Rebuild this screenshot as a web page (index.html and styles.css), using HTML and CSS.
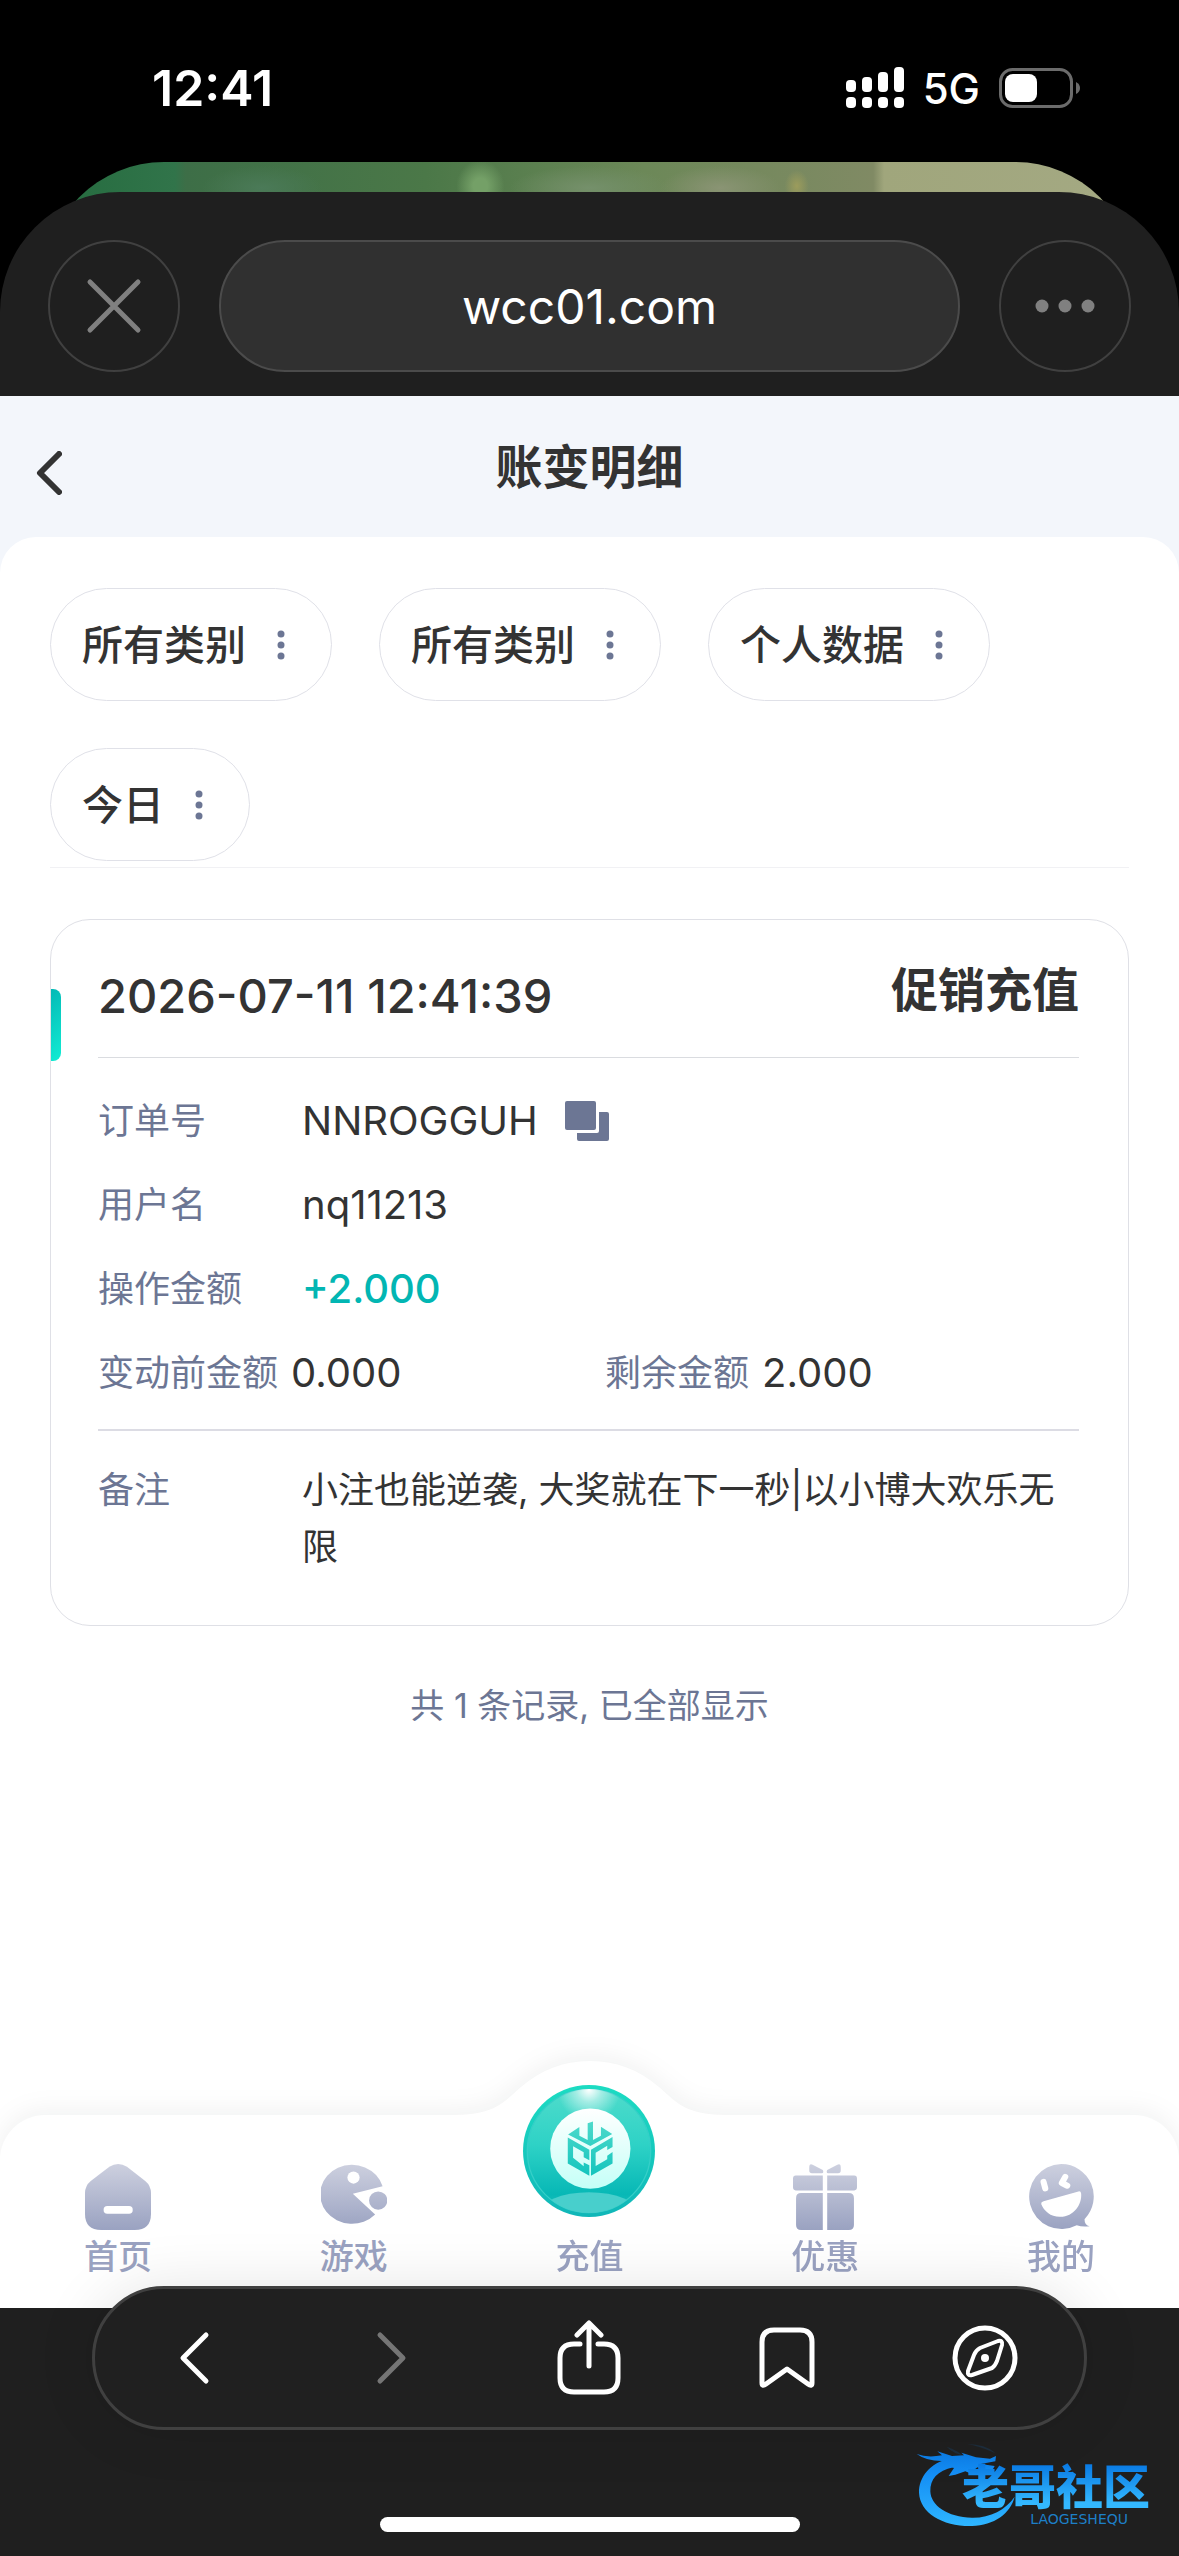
FILE: index.html
```html
<!DOCTYPE html>
<html lang="zh-CN">
<head>
<meta charset="utf-8">
<meta name="viewport" content="width=device-width, initial-scale=1">
<title>账变明细</title>
<link rel="stylesheet" href="styles.css">
</head>
<body>
<header class="status">
  <time class="status-time">12:41</time>
  <div class="status-icons">
    <svg class="signal" viewBox="0 0 58 42" aria-hidden="true">
      <g fill="#fff">
        <rect x="0" y="13" width="10" height="12" rx="4"/><rect x="16" y="10" width="10" height="15" rx="4"/><rect x="32" y="5" width="10" height="20" rx="4"/><rect x="48" y="0" width="10" height="25" rx="4"/>
        <rect x="0" y="30" width="10" height="11" rx="4"/><rect x="16" y="30" width="10" height="11" rx="4"/><rect x="32" y="30" width="10" height="11" rx="4"/><rect x="48" y="30" width="10" height="11" rx="4"/>
      </g>
    </svg>
    <span class="network">5G</span>
    <svg class="battery" viewBox="0 0 82 40" aria-hidden="true">
      <rect x="1.500" y="1.500" width="71" height="37" rx="12" fill="none" stroke="#6b6b6b" stroke-width="3"/>
      <path d="M77 14Q81 16 81 20T77 26Z" fill="#6b6b6b"/>
      <rect x="6" y="6" width="32" height="28" rx="8" fill="#fff"/>
    </svg>
  </div>
</header>

<div class="backdrop"></div>

<div class="sheet">
  <div class="address-bar">
    <button class="round-btn" type="button" aria-label="关闭">
      <svg width="56" height="56" viewBox="0 0 56 56"><path d="M4 4L52 52M52 4L4 52" stroke="#808080" stroke-width="5" stroke-linecap="round"/></svg>
    </button>
    <button class="url" type="button">wcc01.com</button>
    <button class="round-btn" type="button" aria-label="更多">
      <svg width="60" height="14" viewBox="0 0 60 14" fill="#808080"><circle cx="7" cy="7" r="6.500"/><circle cx="30" cy="7" r="6.500"/><circle cx="53" cy="7" r="6.500"/></svg>
    </button>
  </div>

  <div class="app">
    <div class="app-head">
      <button class="back" type="button" aria-label="返回">
        <svg width="26" height="44" viewBox="0 0 26 44"><path d="M23 3L4 22L23 41" fill="none" stroke="#333" stroke-width="6" stroke-linecap="round" stroke-linejoin="round"/></svg>
      </button>
      <h1 class="title">账变明细</h1>
    </div>

    <main class="panel">
      <div class="filters">
        <button class="chip" type="button" aria-haspopup="listbox"><span>所有类别</span><svg class="dots" viewBox="0 0 8 30"><circle cx="4" cy="4" r="3.500"/><circle cx="4" cy="15" r="3.500"/><circle cx="4" cy="26" r="3.500"/></svg></button>
        <button class="chip" type="button" aria-haspopup="listbox"><span>所有类别</span><svg class="dots" viewBox="0 0 8 30"><circle cx="4" cy="4" r="3.500"/><circle cx="4" cy="15" r="3.500"/><circle cx="4" cy="26" r="3.500"/></svg></button>
        <button class="chip" type="button" aria-haspopup="listbox"><span>个人数据</span><svg class="dots" viewBox="0 0 8 30"><circle cx="4" cy="4" r="3.500"/><circle cx="4" cy="15" r="3.500"/><circle cx="4" cy="26" r="3.500"/></svg></button>
        <button class="chip" type="button" aria-haspopup="listbox"><span>今日</span><svg class="dots" viewBox="0 0 8 30"><circle cx="4" cy="4" r="3.500"/><circle cx="4" cy="15" r="3.500"/><circle cx="4" cy="26" r="3.500"/></svg></button>
      </div>

      <article class="card">
        <div class="card-head">
          <time class="card-date">2026-07-11 12:41:39</time>
          <h2 class="card-type">促销充值</h2>
        </div>
        <dl class="details">
          <div class="row">
            <dt>订单号</dt>
            <dd>NNROGGUH
              <button class="copy" type="button" aria-label="复制">
                <svg width="44" height="40" viewBox="0 0 44 40" fill="#6c7694"><rect width="31" height="29" rx="2"/><path d="M34 11H42Q44 11 44 13V38Q44 40 42 40H14Q12 40 12 38V32H32Q34 32 34 30Z"/></svg>
              </button>
            </dd>
          </div>
          <div class="row"><dt>用户名</dt><dd>nq11213</dd></div>
          <div class="row"><dt>操作金额</dt><dd class="gain">+2.000</dd></div>
          <div class="row row-pair">
            <div class="pair"><dt>变动前金额</dt><dd>0.000</dd></div>
            <div class="pair"><dt>剩余金额</dt><dd>2.000</dd></div>
          </div>
        </dl>
        <dl class="remark">
          <dt>备注</dt>
          <dd>小注也能逆袭, 大奖就在下一秒|以小博大欢乐无限</dd>
        </dl>
      </article>

      <p class="summary">共 1 条记录, 已全部显示</p>
    </main>

    <nav class="tabs">
      <svg class="hump" viewBox="0 0 270 56" aria-hidden="true"><path d="M0 54C40 54 50 40 66 26C86 9 108 0 135 0S184 9 204 26C220 40 230 54 270 54V56H0Z" fill="#fff"/></svg>
      <a class="tab" href="#home">
        <svg width="66" height="66" viewBox="0 0 195 195">
          <defs><linearGradient id="soft" x1="0" y1="0" x2="0" y2="195" gradientUnits="userSpaceOnUse"><stop offset="0" stop-color="#cdd0df"/><stop offset="1" stop-color="#9aa2c1"/></linearGradient></defs>
          <path d="M72 8Q98 -8 124 8L178 50Q195 64 195 86V147Q195 195 147 195H48Q0 195 0 147V86Q0 64 17 50Z" fill="url(#soft)"/>
          <rect x="55" y="124" width="86" height="23" rx="11" fill="#fff"/>
        </svg>
        <span>首页</span>
      </a>
      <a class="tab" href="#games">
        <svg width="66" height="66" viewBox="0 0 195 195">
          <path d="M182 66A94 87 0 1 0 160 149L94 88Z" fill="url(#soft)"/>
          <circle cx="96" cy="40" r="18" fill="#fff"/>
          <circle cx="169" cy="108" r="27" fill="url(#soft)"/>
        </svg>
        <span>游戏</span>
      </a>
      <a class="tab tab-main" href="#deposit">
        <svg width="132" height="132" viewBox="249 132 398 398">
          <defs>
            <linearGradient id="rim" x1="0" y1="0" x2="0" y2="1"><stop offset="0" stop-color="#1cdcc2"/><stop offset="1" stop-color="#10b6b8"/></linearGradient>
            <linearGradient id="ball" x1="0" y1="0" x2="0" y2="1"><stop offset="0" stop-color="#4fdccb"/><stop offset=".45" stop-color="#2ed2c6"/><stop offset=".85" stop-color="#07b8b6"/><stop offset="1" stop-color="#1cc0c0"/></linearGradient>
            <radialGradient id="shine" cx="448" cy="146" r="95" gradientUnits="userSpaceOnUse"><stop offset="0" stop-color="#fff"/><stop offset=".4" stop-color="#fff" stop-opacity=".5"/><stop offset="1" stop-color="#fff" stop-opacity="0"/></radialGradient>
            <linearGradient id="disc" x1="0" y1="0" x2="0" y2="1"><stop offset="0" stop-color="#fff"/><stop offset="1" stop-color="#c4fff7"/></linearGradient>
            <linearGradient id="mark" x1="0" y1="240" x2="0" y2="406" gradientUnits="userSpaceOnUse"><stop offset="0" stop-color="#4fdacb"/><stop offset="1" stop-color="#14c4bd"/></linearGradient>
            <clipPath id="ballclip"><circle cx="448" cy="331" r="187"/></clipPath>
          </defs>
          <circle cx="448" cy="331" r="199" fill="url(#rim)"/>
          <circle cx="448" cy="331" r="186" fill="url(#ball)" stroke="#35cfc8" stroke-width="4"/>
          <g clip-path="url(#ballclip)"><circle cx="448" cy="146" r="95" fill="url(#shine)"/><ellipse cx="448" cy="520" rx="150" ry="65" fill="#48cfcc"/></g>
          <circle cx="452" cy="324" r="121" fill="url(#disc)"/>
          <g fill="url(#mark)">
            <path d="M385 281L419 259V285L444 298V247L460 242V298L484 285V258L518 280L452 316Z"/>
            <path fill-rule="evenodd" d="M384 290L449 327V359L432 350V335L400 317V351L432 377V366L449 374V406L384 369Z"/>
            <path d="M454 327L519 289V319L503 328V315L468 336V376L503 356V345L519 334V369L454 406Z"/>
          </g>
        </svg>
        <span>充值</span>
      </a>
      <a class="tab" href="#offers">
        <svg width="66" height="66" viewBox="0 0 195 195" fill="url(#soft)">
          <path d="M51 10Q51 -3 61 2L91 18Q95 27 88 27H59Q51 27 51 19ZM144 10Q144 -3 134 2L104 18Q100 27 107 27H136Q144 27 144 19Z"/>
          <path d="M11 34H91V78H11Q3 78 3 69V43Q3 34 11 34ZM104 34H184Q192 34 192 43V69Q192 78 184 78H104Z"/>
          <path d="M27 86H91V195H27Q12 195 12 180V101Q12 86 27 86ZM104 86H168Q183 86 183 101V180Q183 195 168 195H104Z"/>
        </svg>
        <span>优惠</span>
      </a>
      <a class="tab" href="#mine">
        <svg width="66" height="66" viewBox="0 0 195 195">
          <path d="M98 0A96 96 0 0 1 167 163Q167 181 182 184Q160 187 144 181A96 96 0 1 1 98 0Z" fill="url(#soft)"/>
          <g fill="none" stroke="#fff" stroke-width="18" stroke-linecap="round" stroke-linejoin="round"><path d="M46 53L51 72M110 38L100 56L116 64"/></g>
          <path d="M46 110L149 81Q156 79 157 87C160 120 135 155 96 156C68 157 47 139 39 118Q38 112 46 110Z" fill="#fff"/>
        </svg>
        <span>我的</span>
      </a>
    </nav>
  </div>

  <footer class="browser-foot">
    <div class="toolbar">
      <button type="button" aria-label="后退"><svg width="34" height="56" viewBox="0 0 34 56"><path d="M29 5L6 28L29 51" stroke="#fff"/></svg></button>
      <button type="button" aria-label="前进"><svg width="34" height="56" viewBox="0 0 34 56"><path d="M5 5L28 28L5 51" stroke="#757575"/></svg></button>
      <button type="button" aria-label="分享"><svg class="share" width="64" height="76" viewBox="0 0 64 76"><path d="M23 24H17Q3 24 3 38V58Q3 72 17 72H47Q61 72 61 58V38Q61 24 47 24H41M32 46V4M20 15L32 3L44 15" stroke="#fff"/></svg></button>
      <button type="button" aria-label="书签"><svg width="58" height="62" viewBox="0 0 58 62"><path d="M4 15Q4 3 16 3H42Q54 3 54 15V56Q54 60 50 57L29 42L8 57Q4 60 4 56Z" stroke="#fff"/></svg></button>
      <button type="button" aria-label="浏览"><svg width="66" height="66" viewBox="0 0 66 66"><circle cx="33" cy="33" r="30" stroke="#fff"/><path d="M46 16Q51 15 50 20L45 36Q43 41 40 43L20 50Q15 51 16 46L22 30Q24 25 28 23Z" stroke="#fff" stroke-width="4"/><circle cx="33" cy="33" r="4" fill="#fff" stroke="none"/></svg></button>
    </div>
    <div class="home-indicator"></div>
  </footer>
</div>

<div class="watermark">
  <svg class="dragon" viewBox="0 0 867 378" aria-hidden="true">
    <defs><linearGradient id="blue" x1="0" y1="60" x2="0" y2="290" gradientUnits="userSpaceOnUse"><stop offset="0" stop-color="#0a78e0"/><stop offset=".35" stop-color="#1590f6"/><stop offset="1" stop-color="#2fb6ff"/></linearGradient></defs>
    <g fill="url(#blue)">
      <path d="M178 86C120 98 86 142 87 188C90 250 160 290 246 288C312 286 362 250 374 200C346 240 300 264 246 263C172 262 122 226 121 184C120 148 142 122 190 112Z"/>
      <path d="M80 72Q112 84 156 76L142 64L186 78L222 76L214 68L258 82L300 86L318 78L316 94L272 102L314 108L304 126L280 118L262 112L240 130L226 124L196 134L176 138L192 114L160 104L176 92Q116 98 80 72Z"/>
      <path d="M170 50Q205 62 215 76Q190 70 170 50ZM232 42Q290 44 316 70Q270 48 232 42Z" opacity=".15"/>
    </g>
  </svg>
  <div class="brand"><span class="brand-name">老哥社区</span><span class="brand-latin">LAOGESHEQU</span></div>
</div>
</body>
</html>
```
FILE: styles.css
```css
* { box-sizing: border-box; }

body {
  margin: 0;
  min-height: 100vh;
  display: flex;
  flex-direction: column;
  position: relative;
  background: #000;
  color: #333;
  font-family: Inter, "Noto Sans CJK SC", sans-serif;
}

button {
  margin: 0;
  padding: 0;
  border: 0;
  background: none;
  color: inherit;
  font: inherit;
}

svg { display: block; }
h1, h2, p, dl, dd { margin: 0; }

/* System status bar */
.status {
  height: 162px;
  padding: 14px 98px 0 152px;
  display: flex;
  align-items: center;
  justify-content: space-between;
  color: #fff;
}
.status-time { font-size: 50px; font-weight: 600; }
.status-icons { display: flex; align-items: center; gap: 19px; }
.signal { width: 58px; height: 42px; }
.network { font-size: 42px; font-weight: 500; }
.battery { width: 82px; height: 40px; }

/* Blurred page that peeks out behind the sheet */
.backdrop {
  height: 130px;
  margin: 0 44px -100px;
  border-radius: 120px 120px 0 0;
  background:
    radial-gradient(ellipse 24px 26px at 40% 24px, #74a067 30%, transparent),
    radial-gradient(ellipse 12px 16px at 69% 24px, #9c9c5c, transparent),
    radial-gradient(ellipse 60px 22px at 20% 26px, #4b7a58, transparent),
    radial-gradient(ellipse 80px 22px at 50% 26px, #75906b, transparent),
    radial-gradient(ellipse 60px 22px at 62% 26px, #8a9474, transparent),
    linear-gradient(90deg, transparent 76%, #a0a67c 77%, #a4a983),
    linear-gradient(90deg, #246b3e, #31744a 12%, #3d6e47 13%, #4b7848 35%, #6c8858 55%, #808a64 76%);
}

.sheet {
  flex: 1;
  display: flex;
  flex-direction: column;
  position: relative;
  border-radius: 120px 120px 0 0;
  background: #1f1f1f;
}
.address-bar {
  display: flex;
  gap: 39px;
  padding: 48px 48px 24px;
}
.round-btn, .url {
  height: 132px;
  border: 2px solid #404040;
  border-radius: 66px;
}
.round-btn {
  width: 132px;
  display: grid;
  place-items: center;
}
.url {
  flex: 1;
  background: #303030;
  border-color: #4b4b4b;
  color: #fff;
  font-size: 48px;
}

/* Web app */
.app {
  flex: 1;
  display: flex;
  flex-direction: column;
  background: #f3f6fb;
}
.app-head {
  height: 141px;
  padding: 0 36px;
  display: grid;
  grid-template-columns: 1fr auto 1fr;
  align-items: center;
}
.back { justify-self: start; padding-top: 12px; }
.title { font-size: 47px; line-height: 70px; font-weight: 600; }

.panel {
  flex: 1;
  margin-bottom: -50px;
  padding: 51px 50px;
  border-radius: 36px 36px 0 0;
  background: #fff;
}
.filters {
  display: flex;
  flex-wrap: wrap;
  gap: 47px;
  padding-bottom: 6px;
  border-bottom: 1px solid #f1f1f4;
}
.chip {
  height: 113px;
  padding: 0 46px 0 31px;
  display: flex;
  align-items: center;
  gap: 31px;
  border: 1px solid #e0e1e8;
  border-radius: 57px;
  font-size: 41px;
  font-weight: 500;
}
.chip span { padding-bottom: 6px; }
.dots { width: 8px; height: 30px; fill: #6c7694; }

.card {
  position: relative;
  margin-top: 51px;
  padding: 0 49px 49px 47px;
  border: 1px solid #dfe0e6;
  border-radius: 40px;
}
.card::before {
  content: "";
  position: absolute;
  left: 0;
  top: 69px;
  width: 10px;
  height: 72px;
  border-radius: 0 8px 8px 0;
  background: linear-gradient(135deg, #04b9b6, #12edd4);
}
.card-head {
  height: 138px;
  display: flex;
  align-items: center;
  justify-content: space-between;
  border-bottom: 1px solid #dadce0;
}
.card-date, .card-type { font-size: 47px; line-height: 60px; }
.card-date { padding-top: 14px; font-weight: 500; }
.card-type { padding-top: 3px; font-weight: 600; }

.details {
  display: grid;
  gap: 34px;
  padding: 38px 0 31px;
  border-bottom: 2px solid #dcdce4;
}
.row {
  display: grid;
  grid-template-columns: 204px 1fr;
  align-items: center;
}
dt { color: #6c7694; font-size: 36px; line-height: 50px; }
dd { font-size: 40px; line-height: 50px; display: flex; align-items: center; gap: 27px; }
.gain { color: #02b6b3; font-weight: 500; }
.row-pair { grid-template-columns: 507px 1fr; }
.pair { display: flex; align-items: center; gap: 13px; }

.remark {
  display: grid;
  grid-template-columns: 204px 1fr;
  padding-top: 31px;
}
.remark dt, .remark dd { display: block; font-size: 36px; line-height: 57px; }

.summary {
  margin-top: 55px;
  color: #6c7694;
  font-size: 34px;
  line-height: 50px;
  text-align: center;
}

/* Bottom tabs */
.tabs {
  position: relative;
  display: flex;
  align-items: flex-end;
  padding: 49px 0 29px;
  border-radius: 45px 45px 0 0;
  background: #fff;
  filter: drop-shadow(0 -4px 12px rgba(0, 20, 20, .06));
}
.hump {
  position: absolute;
  left: 50%;
  top: -54px;
  width: 270px;
  height: 56px;
  transform: translateX(-50%);
}
.tab {
  flex: 1;
  position: relative;
  display: flex;
  flex-direction: column;
  align-items: center;
  gap: 5px;
  color: #9aa2c1;
  font-size: 34px;
  line-height: 44px;
  font-weight: 500;
  text-decoration: none;
}
.tab-main { margin-top: -80px; gap: 18px; }

/* Browser toolbar */
.browser-foot {
  position: relative;
  padding: 0 92px 24px;
  background: #1f1f1f;
}
.toolbar {
  height: 144px;
  margin-top: -22px;
  display: flex;
  border: 3px solid #404040;
  border-radius: 72px;
  background: #202020;
  box-shadow: 0 0 60px rgba(0, 0, 0, .1);
}
.toolbar button {
  flex: 1;
  display: grid;
  place-items: center;
}
.toolbar svg {
  fill: none;
  stroke-width: 5;
  stroke-linecap: round;
  stroke-linejoin: round;
}
.home-indicator {
  width: 420px;
  height: 15px;
  margin: 87px auto 0;
  border-radius: 8px;
  background: #fff;
}

/* Community mark over the page corner */
.watermark {
  position: absolute;
  right: 0;
  bottom: 0;
  width: 289px;
  height: 126px;
}
.dragon { width: 289px; height: 126px; }
.brand {
  position: absolute;
  left: 72px;
  top: 27px;
  display: flex;
  flex-direction: column;
  align-items: flex-end;
  font-family: "Noto Sans CJK SC", sans-serif;
}
.brand-name {
  font-size: 47px;
  line-height: 54px;
  font-weight: 900;
  color: transparent;
  background: linear-gradient(#0a7be4 15%, #33b8ff 85%);
  background-clip: text;
}
.brand-latin { padding-right: 22px; color: #1d7fc8; font-family: "DejaVu Sans", sans-serif; font-size: 14px; line-height: 16px; }
```
